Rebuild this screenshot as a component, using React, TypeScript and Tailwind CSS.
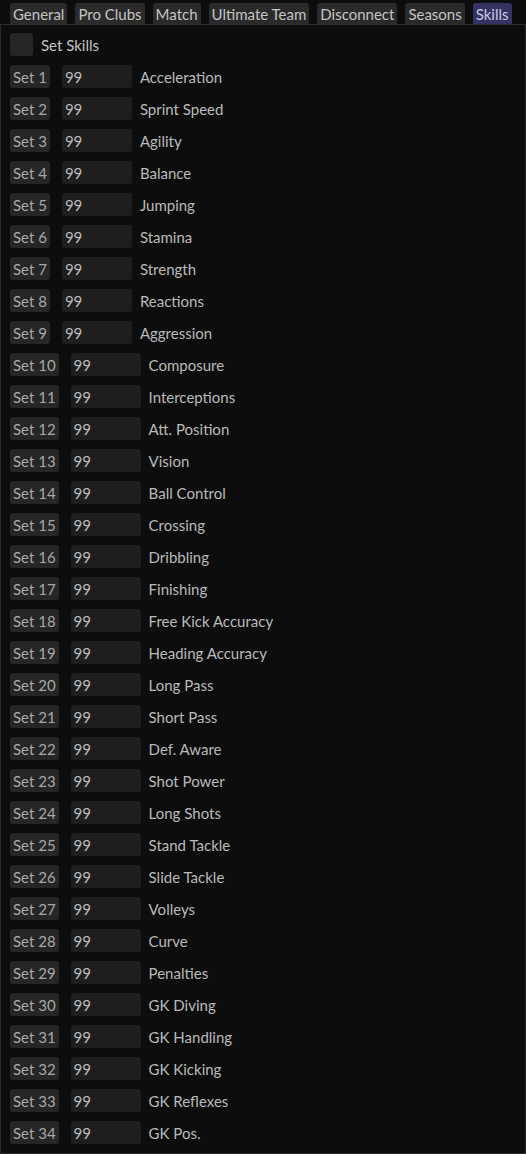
const tabs = ["General", "Pro Clubs", "Match", "Ultimate Team", "Disconnect", "Seasons", "Skills"];

const skills = [
	"Acceleration", "Sprint Speed", "Agility", "Balance", "Jumping", "Stamina", "Strength", "Reactions",
	"Aggression", "Composure", "Interceptions", "Att. Position", "Vision", "Ball Control", "Crossing",
	"Dribbling", "Finishing", "Free Kick Accuracy", "Heading Accuracy", "Long Pass", "Short Pass",
	"Def. Aware", "Shot Power", "Long Shots", "Stand Tackle", "Slide Tackle", "Volleys", "Curve",
	"Penalties", "GK Diving", "GK Handling", "GK Kicking", "GK Reflexes", "GK Pos.",
];

export default function App() {
	return (
		<div className="w-[526px] h-[1154px] bg-[#0d0d0d] text-[15px] text-[#c4c4c4] font-['Lato',sans-serif] overflow-hidden flex flex-col">
			{/* Tab bar */}
			<div className="flex items-end gap-[8px] pl-[10px] pt-[3px] h-[25px] border-b border-[#2e2e2e] whitespace-nowrap">
				{tabs.map((t) => (
					<div
						key={t}
						className={
							"h-[21px] px-[3px] rounded-t-[3px] leading-[22px] " +
							(t === "Skills" ? "bg-[#353163] text-[#c8c8e0]" : "bg-[#2a2a2a] text-[#c4c4c4]")
						}
					>
						{t}
					</div>
				))}
			</div>

			{/* Body */}
			<div className="flex-1 border-x border-b border-[#2a2a2a] flex flex-col gap-[9px] px-[9px] pt-[8px]">
				<div className="flex items-center gap-[8px] h-[23px]">
					<div className="w-[23px] h-[23px] rounded-[3px] bg-[#262626]" />
					<span className="leading-[24px]">Set Skills</span>
				</div>
				{skills.map((s, i) => (
					<div key={s} className="flex items-center h-[23px] whitespace-nowrap leading-[24px]">
						<div className="h-[23px] px-[3px] rounded-[3px] bg-[#262626] text-[#a8a8a8]">
							Set {i + 1}
						</div>
						<div className="ml-[12px] w-[70px] h-[23px] rounded-[3px] bg-[#1e1e1e] text-[#bcbcbc] px-[3px]">
							99
						</div>
						<span className="ml-[8px] text-[#bababa]">{s}</span>
					</div>
				))}
			</div>
		</div>
	);
}
